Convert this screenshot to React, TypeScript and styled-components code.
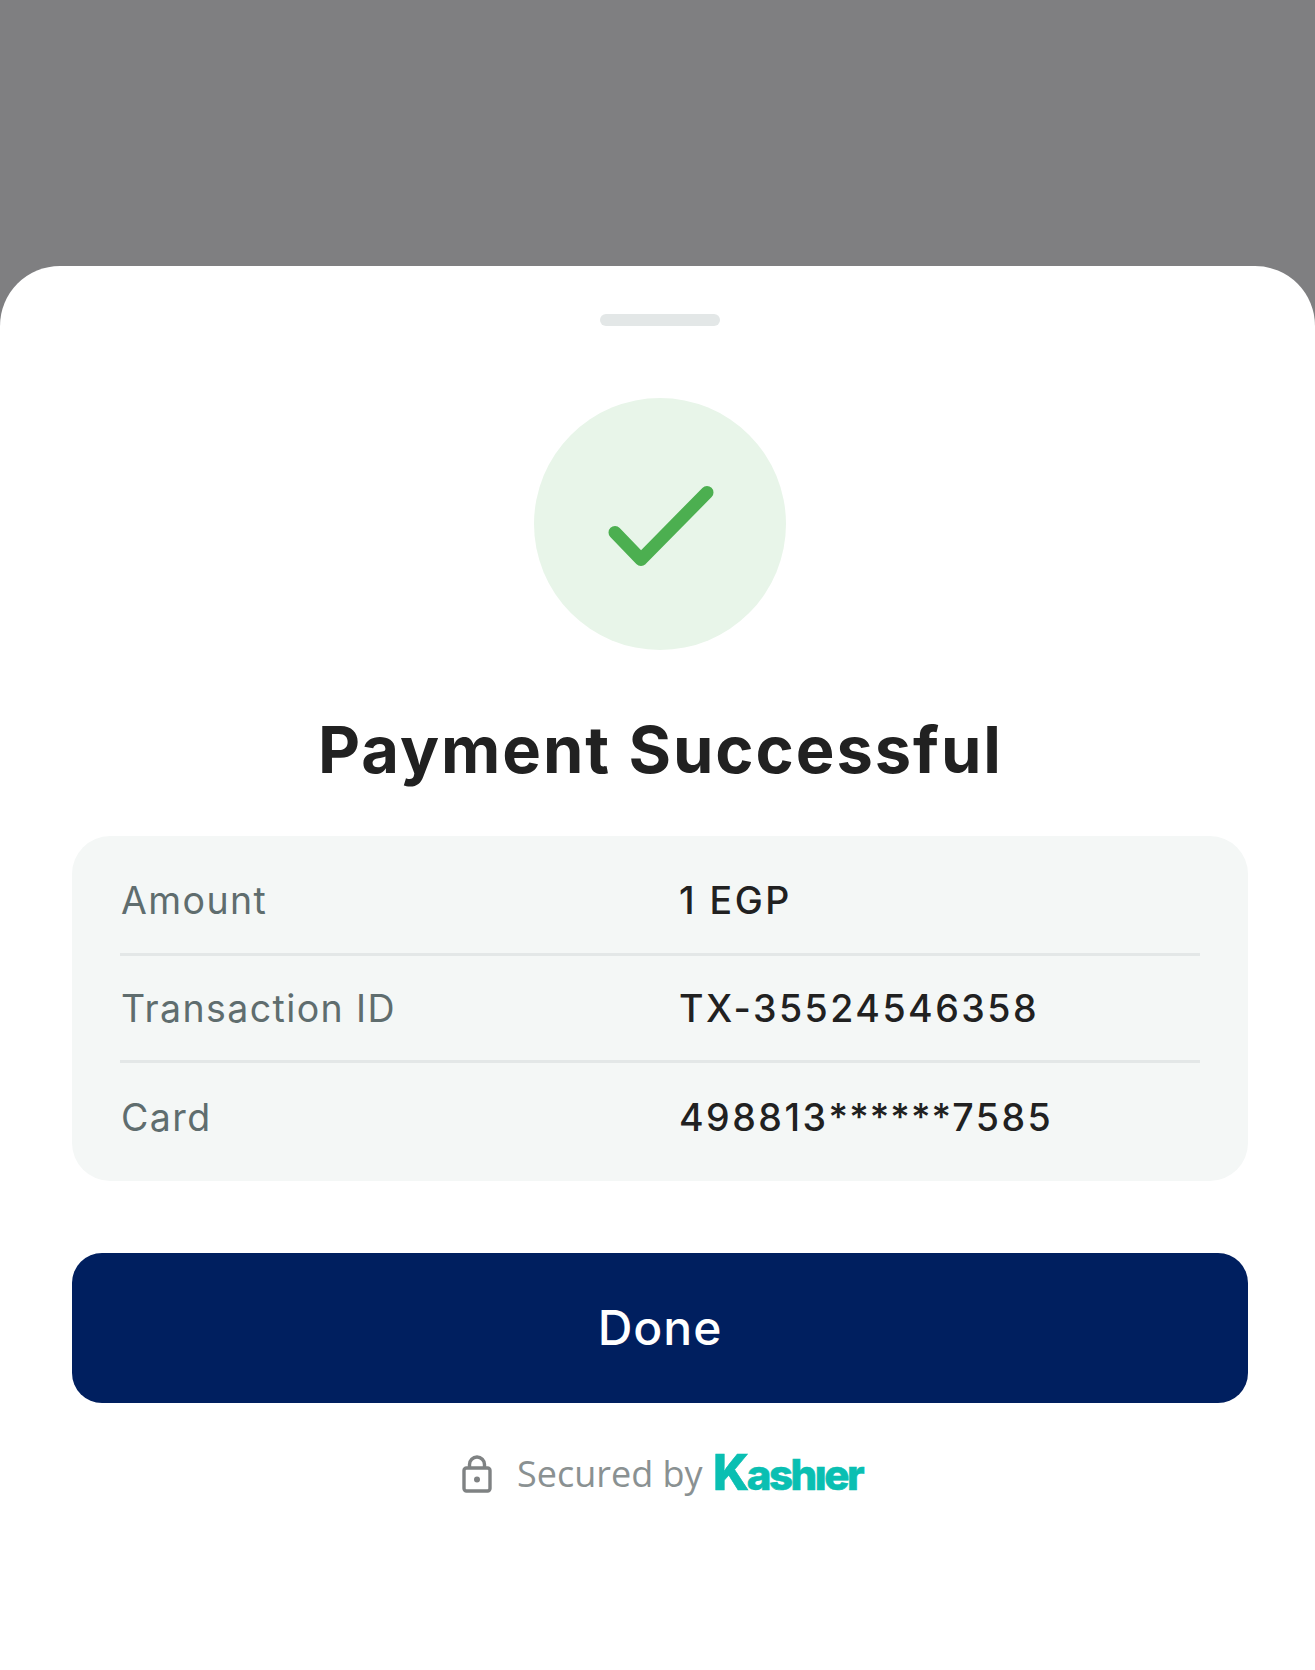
import styled, { createGlobalStyle } from 'styled-components';

const GlobalStyle = createGlobalStyle`
  html, body {
    margin: 0;
    padding: 0;
    background: #7f7f81;
  }
  * { box-sizing: border-box; }
`;

const Backdrop = styled.div`
  width: 1315px;
  height: 1670px;
  padding-top: 266px;
  display: flex;
  flex-direction: column;
  background: #7f7f81;
  overflow: hidden;
`;

const Sheet = styled.section`
  flex: 1;
  display: flex;
  flex-direction: column;
  align-items: center;
  padding: 48px 67px 0 72px;
  background: #fff;
  border-radius: 60px 60px 0 0;
  font-family: Inter, "Liberation Sans", sans-serif;
`;

const Handle = styled.div`
  width: 120px;
  height: 12px;
  border-radius: 6px;
  background: #e3e7e7;
`;

const SuccessBadge = styled.div`
  width: 252px;
  height: 252px;
  margin-top: 72px;
  padding: 3px 0 0 2px;
  border-radius: 50%;
  background: #e8f5e9;
  display: flex;
  align-items: center;
  justify-content: center;
`;

const Title = styled.h1`
  margin: 58px 0 0;
  padding-left: 1px;
  font-size: 65px;
  line-height: 84px;
  font-weight: 700;
  letter-spacing: 1.95px;
  color: #212121;
`;

const Details = styled.div`
  width: 1176px;
  margin-top: 44px;
  padding: 12px 48px 10px;
  background: #f4f7f6;
  border-radius: 38px;
`;

const Row = styled.div`
  height: 107.5px;
  padding-top: 1px;
  display: grid;
  grid-template-columns: 559px 1fr;
  align-items: center;
  border-bottom: 3px solid #e3e7e7;

  &:last-child { border-bottom: none; }
`;

const Label = styled.span`
  margin-left: 1px;
  font-size: 37.5px;
  font-weight: 400;
  letter-spacing: 1.4px;
  color: #5f6d6e;
`;

const Value = styled.span`
  font-size: 37.5px;
  font-weight: 500;
  letter-spacing: 2.5px;
  color: #212121;
`;

const Masked = styled.span`
  letter-spacing: 1.1px;
`;

const DoneButton = styled.button`
  width: 1176px;
  height: 150px;
  margin-top: 72px;
  padding: 0 0 1px;
  border: none;
  border-radius: 30px;
  background: #001f5f;
  color: #fff;
  font-family: inherit;
  font-size: 48px;
  font-weight: 500;
  letter-spacing: 1px;
`;

const SecuredBy = styled.footer`
  margin: 48px 0 0 4.5px;
  display: flex;
  align-items: center;
  height: 46px;
`;

const SecuredText = styled.span`
  margin-left: 24.5px;
  font-family: "Open Sans", "Noto Sans", sans-serif;
  font-size: 36px;
  color: #8a9192;
`;

const Brand = styled.span`
  margin-left: 10.5px;
  font-family: Inter, sans-serif;
  font-size: 42px;
  line-height: 46px;
  font-weight: 800;
  letter-spacing: -2.5px;
  color: #0abfb2;
  -webkit-text-stroke: 0.6px #0abfb2;

  &::first-letter {
    font-size: 49px;
  }
`;

const CheckIcon = () => (
  <svg width="116" height="92" viewBox="0 0 116 92" fill="none">
    <path d="M12 52.5 38 79.5 104 12.5" stroke="#4caf50" strokeWidth="13" strokeLinecap="round" strokeLinejoin="round" />
  </svg>
);

const LockIcon = () => (
  <svg width="30" height="38" viewBox="0 0 30 38" fill="none">
    <rect x="2" y="13" width="26" height="23" rx="2.5" stroke="#7f8283" strokeWidth="3.4" />
    <path d="M7.5 13V9.5a7.5 7.5 0 0 1 15 0V13" stroke="#7f8283" strokeWidth="3.4" />
    <circle cx="15" cy="24.5" r="3" fill="#7f8283" />
  </svg>
);

const rows = [
  { label: 'Amount', value: '1 EGP' },
  { label: 'Transaction ID', value: 'TX-35524546358' },
  { label: 'Card', value: '498813******7585' },
];

export default function App() {
  return (
    <Backdrop>
      <GlobalStyle />
      <Sheet>
        <Handle />
        <SuccessBadge>
          <CheckIcon />
        </SuccessBadge>
        <Title>Payment Successful</Title>
        <Details>
          {rows.map((row) => (
            <Row key={row.label}>
              <Label>{row.label}</Label>
              <Value>
                {row.value.split(/(\*+)/).map((part, i) =>
                  part.startsWith('*') ? <Masked key={i}>{part}</Masked> : part,
                )}
              </Value>
            </Row>
          ))}
        </Details>
        <DoneButton>Done</DoneButton>
        <SecuredBy>
          <LockIcon />
          <SecuredText>Secured by</SecuredText>
          <Brand>Kashıer</Brand>
        </SecuredBy>
      </Sheet>
    </Backdrop>
  );
}
